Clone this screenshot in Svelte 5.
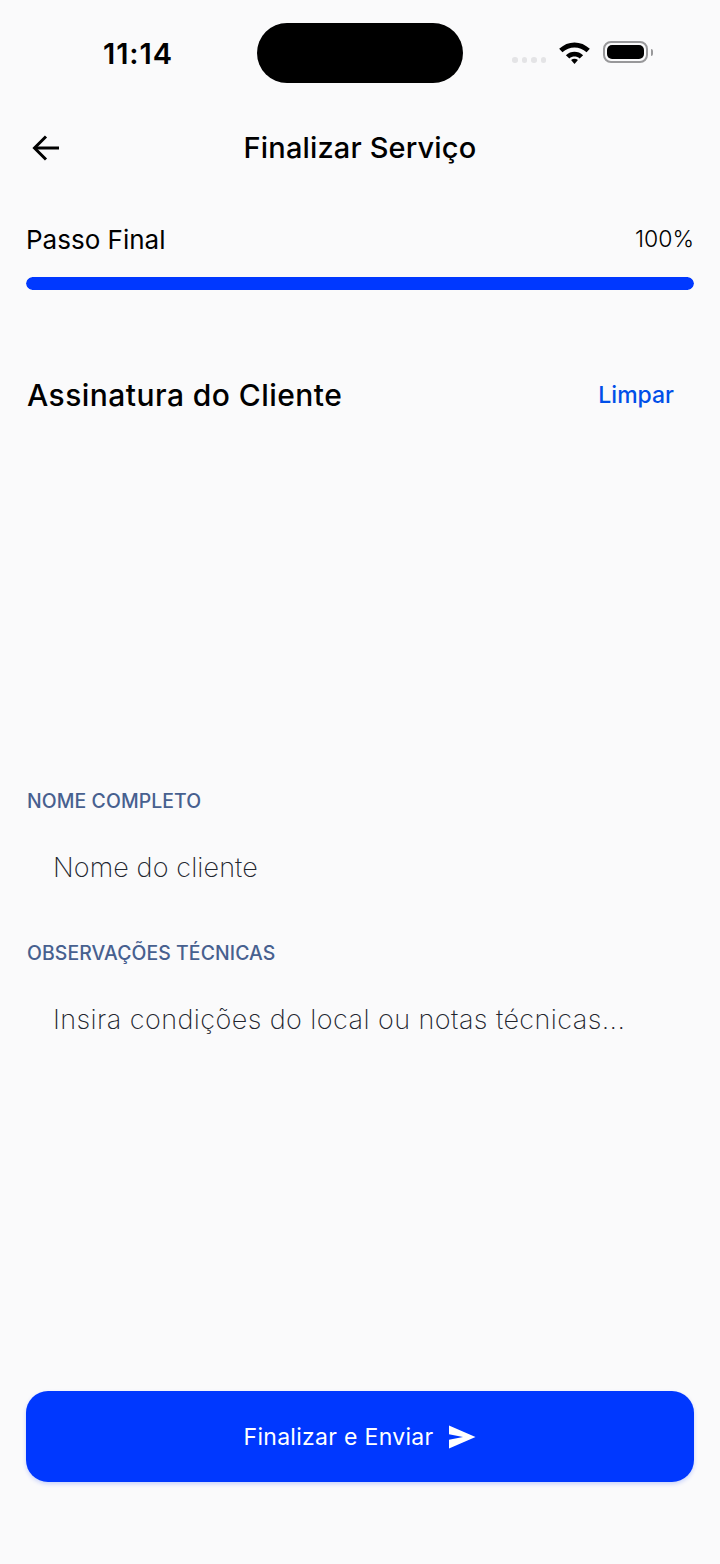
<script lang="ts">
    let name = "";
    let notes = "";
</script>

<div class="page">
    <div class="status">
        <span class="time">11:14</span>
        <div class="island"></div>
        <div class="status-icons">
            <div class="dots"><i></i><i></i><i></i><i></i></div>
            <svg class="wifi" width="31" height="23" viewBox="0 0 32 24">
                <path d="M0 8.200C9 -.8 23 -.8 32 8.200l-3.400 3.600C21.400 5 10.600 5 3.400 11.800z" />
                <path d="M7 14.800c5.200-4.800 12.800-4.800 18 0l-3.600 3.400c-3.300-2.600-7.500-2.600-10.800 0z" />
                <path d="M12.400 19.800c2.200-1.600 5-1.600 7.200 0L16 24z" />
            </svg>
            <div class="battery"><div class="battery-fill"></div></div>
            <div class="battery-tip"></div>
        </div>
    </div>

    <header class="topbar">
        <button class="back" aria-label="Voltar">
            <svg width="32" height="32" viewBox="0 0 32 32" fill="none" stroke="#000" stroke-width="3">
                <path d="M29 16H5" />
                <path d="M16 4.500 4.500 16 16 27.500" />
            </svg>
        </button>
        <h1>Finalizar Serviço</h1>
    </header>

    <section class="progress">
        <div class="progress-labels">
            <span class="step">Passo Final</span>
            <span class="percent">100%</span>
        </div>
        <div class="track"><div class="bar" style="width: 100%"></div></div>
    </section>

    <section class="signature">
        <h2>Assinatura do Cliente</h2>
        <button class="clear">Limpar</button>
    </section>

    <div class="canvas"></div>

    <label class="field">
        <span>NOME COMPLETO</span>
        <input bind:value={name} placeholder="Nome do cliente" />
    </label>

    <label class="field notes">
        <span>OBSERVAÇÕES TÉCNICAS</span>
        <textarea bind:value={notes} placeholder="Insira condições do local ou notas técnicas..."></textarea>
    </label>

    <button class="submit">
        Finalizar e Enviar
        <svg width="28" height="24" viewBox="0 0 28 24" fill="#fff">
            <path d="M1 .5 27.500 12 1 23.500v-8.700L15 12 1 9.200z" />
        </svg>
    </button>
</div>

<style>
    :global(body) {
        margin: 0;
        background: #fafafb;
    }

    .page {
        display: flex;
        flex-direction: column;
        width: 720px;
        height: 1564px;
        box-sizing: border-box;
        padding: 0 26px 82px;
        background: #fafafb;
        color: #000;
        font-family: Inter, "Noto Sans", sans-serif;
    }

    .status {
        display: flex;
        align-items: center;
        flex: none;
        height: 60px;
        margin: 23px -26px 0;
        position: relative;
    }

    .time {
        margin-left: 103px;
        font-size: 29px;
        font-weight: 600;
        letter-spacing: 0.9px;
    }

    .island {
        position: absolute;
        left: 257px;
        top: 0;
        width: 206px;
        height: 60px;
        border-radius: 30px;
        background: #000;
    }

    .status-icons {
        display: flex;
        align-items: center;
        margin-left: auto;
        margin-right: 67px;
        margin-top: -2px;
    }

    .dots {
        display: flex;
        gap: 4px;
        margin-right: 13px;
        margin-top: 16px;
    }

    .dots i {
        width: 5.500px;
        height: 5.500px;
        border-radius: 50%;
        background: #e4e4e6;
    }

    .wifi {
        fill: #000;
        margin-right: 13px;
    }

    .battery {
        width: 45px;
        height: 22px;
        box-sizing: border-box;
        padding: 2px;
        border: 2px solid #98989a;
        border-radius: 8px;
    }

    .battery-fill {
        height: 100%;
        border-radius: 5px;
        background: #000;
    }

    .battery-tip {
        width: 2px;
        height: 7px;
        margin-left: 3px;
        border-radius: 0 2px 2px 0;
        background: #98989a;
    }

    .topbar {
        display: flex;
        align-items: center;
        justify-content: center;
        flex: none;
        position: relative;
        height: 40px;
        box-sizing: border-box;
        padding-bottom: 2px;
        margin-top: 45px;
    }

    .back {
        position: absolute;
        left: 4px;
        top: 4px;
        padding: 0;
        border: 0;
        background: none;
        line-height: 0;
    }

    h1 {
        margin: 0;
        font-size: 29px;
        font-weight: 550;
        letter-spacing: 0.15px;
    }

    .progress {
        flex: none;
        margin-top: 55px;
    }

    .progress-labels {
        display: flex;
        align-items: center;
        justify-content: space-between;
        height: 32px;
    }

    .step {
        font-size: 26px;
        font-weight: 400;
    }

    .percent {
        font-size: 23px;
        font-weight: 300;
    }

    .track {
        height: 13px;
        margin-top: 22px;
        border-radius: 7px;
        background: #dfe4f0;
        overflow: hidden;
    }

    .bar {
        height: 100%;
        border-radius: 7px;
        background: #0038ff;
    }

    .signature {
        display: flex;
        align-items: center;
        justify-content: space-between;
        flex: none;
        height: 40px;
        margin-top: 85px;
    }

    h2 {
        margin: 0 0 0 1px;
        font-size: 30px;
        font-weight: 550;
        letter-spacing: 0.45px;
    }

    .clear {
        margin-right: 20px;
        padding: 0;
        border: 0;
        background: none;
        color: #004fe8;
        font-family: inherit;
        font-size: 23px;
        font-weight: 500;
    }

    .canvas {
        flex: none;
        height: 373px;
    }

    .field {
        display: flex;
        flex-direction: column;
        flex: none;
    }

    .field span {
        height: 26px;
        padding-left: 1px;
        color: #47608f;
        font-size: 19.400px;
        font-weight: 450;
        letter-spacing: 0.1px;
        line-height: 26px;
    }

    .field input,
    .field textarea {
        margin: 0;
        padding: 0 27px;
        border: 0;
        outline: 0;
        background: transparent;
        color: #000;
        font-family: inherit;
        font-size: 27px;
        font-weight: 250;
        resize: none;
    }

    .field input::placeholder,
    .field textarea::placeholder {
        color: #22252e;
        opacity: 1;
    }

    .field input {
        height: 68px;
        margin-top: 19px;
        letter-spacing: 0.1px;
    }

    .notes {
        flex: 1;
        margin-top: 39px;
    }

    .field textarea {
        flex: 1;
        margin-top: 7px;
        padding-top: 30px;
        letter-spacing: 0.42px;
        line-height: 34px;
    }

    .submit {
        display: flex;
        align-items: center;
        justify-content: center;
        gap: 15px;
        flex: none;
        height: 91px;
        border: 0;
        border-radius: 22px;
        background: #0038ff;
        box-shadow: 0 2px 4px rgba(0, 56, 255, 0.2);
        color: #fff;
        font-family: inherit;
        font-size: 23px;
        font-weight: 400;
        letter-spacing: 0.3px;
    }
</style>
